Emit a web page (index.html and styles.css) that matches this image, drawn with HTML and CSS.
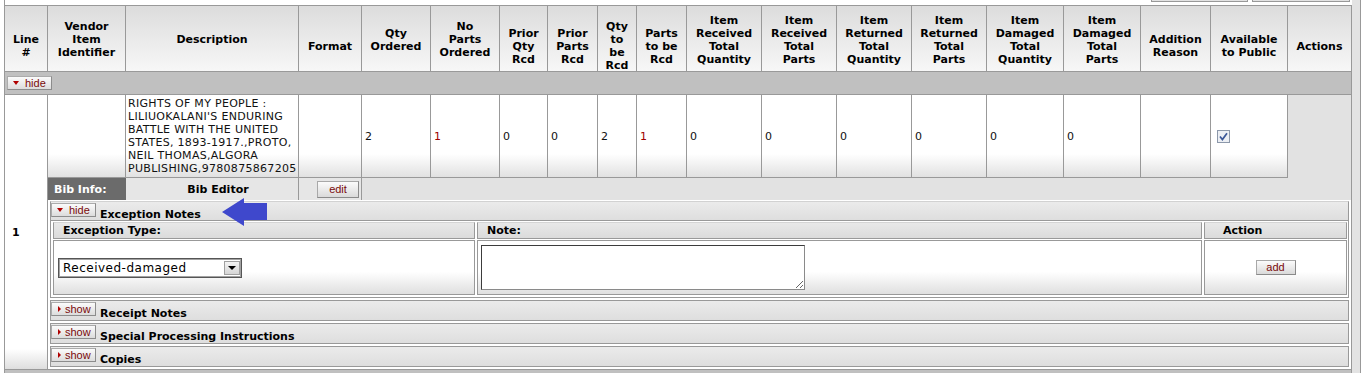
FILE: index.html
```html
<!DOCTYPE html>
<html lang="en">
<head>
  <meta charset="UTF-8">
  <meta name="viewport" content="width=device-width, initial-scale=1.0">
  <title>Receiving Line Items</title>
  <link rel="stylesheet" href="styles.css">
</head>
<body>
  <div class="frame">
    <div class="main">
      <div class="topbar">
        <span class="stub"></span>
        <span class="stub wide"></span>
      </div>

      <div class="sheet">
        <div class="head">
          <div class="th low">Line<br>#</div>
          <div class="th">Vendor<br>Item<br>Identifier</div>
          <div class="th">Description</div>
          <div class="th low">Format</div>
          <div class="th">Qty<br>Ordered</div>
          <div class="th">No<br>Parts<br>Ordered</div>
          <div class="th low">Prior<br>Qty<br>Rcd</div>
          <div class="th low">Prior<br>Parts<br>Rcd</div>
          <div class="th low">Qty<br>to<br>be<br>Rcd</div>
          <div class="th low">Parts<br>to be<br>Rcd</div>
          <div class="th">Item<br>Received<br>Total<br>Quantity</div>
          <div class="th">Item<br>Received<br>Total<br>Parts</div>
          <div class="th">Item<br>Returned<br>Total<br>Quantity</div>
          <div class="th">Item<br>Returned<br>Total<br>Parts</div>
          <div class="th">Item<br>Damaged<br>Total<br>Quantity</div>
          <div class="th">Item<br>Damaged<br>Total<br>Parts</div>
          <div class="th low">Addition<br>Reason</div>
          <div class="th low">Available<br>to Public</div>
          <div class="th low">Actions</div>
        </div>

        <div class="togglebar">
          <button class="tog"><span class="tri-down"></span>hide</button>
        </div>

        <div class="item">
          <div class="lineno">1</div>
          <div class="detail">
            <div class="datarow">
              <div class="td"></div>
              <div class="td desc">RIGHTS OF MY PEOPLE :<br>LILIUOKALANI'S ENDURING<br>BATTLE WITH THE UNITED<br>STATES, 1893-1917.,PROTO,<br>NEIL THOMAS,ALGORA<br>PUBLISHING,9780875867205</div>
              <div class="td"></div>
              <div class="td">2</div>
              <div class="td warn">1</div>
              <div class="td">0</div>
              <div class="td">0</div>
              <div class="td">2</div>
              <div class="td warn">1</div>
              <div class="td">0</div>
              <div class="td">0</div>
              <div class="td">0</div>
              <div class="td">0</div>
              <div class="td">0</div>
              <div class="td">0</div>
              <div class="td"></div>
              <div class="td check">
                <svg class="tick" width="13" height="13" viewBox="0 0 13 13">
                  <rect x="0.5" y="0.5" width="12" height="12" fill="#eceff4" stroke="#8c98aa"/>
                  <path d="M3 6.5 L5.4 9.6 L10 3.2" fill="none" stroke="#3b5898" stroke-width="1.7"/>
                </svg>
              </div>
            </div>

            <div class="bibrow">
              <div class="bib-label">Bib Info:</div>
              <div class="bib-editor">Bib Editor</div>
              <div class="bib-edit"><button class="btn edit">edit</button></div>
            </div>

            <div class="tab first">
              <div class="tab-head open">
                <button class="tog"><span class="tri-down"></span>hide</button>
                <span class="tab-title">Exception Notes</span>
              </div>
              <div class="tab-body">
                <div class="xh">Exception Type:</div>
                <div class="xh">Note:</div>
                <div class="xh act">Action</div>
                <div class="xd">
                  <div class="pick">
                    <span class="pick-val">Received-damaged</span>
                    <span class="pick-btn"><span class="tri-black"></span></span>
                  </div>
                </div>
                <div class="xd"><textarea class="note"></textarea></div>
                <div class="xd center"><button class="btn add">add</button></div>
              </div>
            </div>

            <div class="tab">
              <div class="tab-head">
                <button class="tog"><span class="tri-right"></span>show</button>
                <span class="tab-title">Receipt Notes</span>
              </div>
            </div>

            <div class="tab">
              <div class="tab-head">
                <button class="tog"><span class="tri-right"></span>show</button>
                <span class="tab-title">Special Processing Instructions</span>
              </div>
            </div>

            <div class="tab">
              <div class="tab-head">
                <button class="tog"><span class="tri-right"></span>show</button>
                <span class="tab-title">Copies</span>
              </div>
            </div>
          </div>
        </div>

        <div class="togglebar tail"></div>
      </div>
    </div>
    <div class="gutter"></div>

    <svg class="pointer" width="48" height="30" viewBox="0 0 48 30">
      <polygon points="1,15 23,1 23,6 46,6 46,23 23,23 23,29" fill="#3f48cc"/>
    </svg>
  </div>
</body>
</html>
```

FILE: styles.css
```css
body {
    margin: 0;
    font-family: "DejaVu Sans", Verdana, sans-serif;
    font-size: 11px;
    color: #000;
    background: #fff;
    overflow: hidden;
}

.frame {
    display: flex;
    position: relative;
    height: 373px;
    margin-left: 4px;
    border-left: 1px solid #999;
}

.main {
    width: 1347px;
}

.gutter {
    width: 8px;
    background: #e3e3e3;
    border-right: 1px solid #999;
}

/* cut-off controls above the table */
.topbar {
    height: 5px;
    display: flex;
    justify-content: flex-end;
    gap: 4px;
    padding-right: 2px;
}

.stub {
    width: 97px;
    height: 2px;
    box-sizing: border-box;
    background: #e2e2e2;
    border: 1px solid #999;
    border-top: 0;
}

.stub.wide {
    width: 98px;
}

.sheet {
    border-top: 1px solid #999;
    border-right: 1px solid #999;
}

/* column header */
.head {
    display: grid;
    grid-template-columns: 43px 78px 173px 63px 69px 69px 48px 50px 39px 50px 75px 75px 75px 75px 77px 77px 70px 77px 63px;
}

.th {
    height: 66px;
    box-sizing: border-box;
    padding-top: 2px;
    border-right: 1px solid #999;
    border-bottom: 1px solid #999;
    background: linear-gradient(#dcdcdc, #f7f7f7);
    display: flex;
    flex-direction: column;
    justify-content: center;
    align-items: center;
    text-align: center;
    font-weight: bold;
    line-height: 13px;
}

.th.low {
    padding-top: 15px;
}

.th:last-child {
    border-right: 0;
}

.togglebar {
    height: 23px;
    box-sizing: border-box;
    padding: 4px 0 0 2px;
    background: #c0c0c0;
    border-bottom: 1px solid #999;
}

.togglebar.tail {
    height: 4px;
    padding: 0;
    border-bottom: 0;
}

/* small show / hide buttons */
.tog {
    display: flex;
    align-items: center;
    width: 45px;
    height: 14px;
    box-sizing: border-box;
    margin: 0;
    padding: 0 0 1px 5px;
    border: 1px solid #ababab;
    border-right-color: #8c8c8c;
    border-bottom-color: #8c8c8c;
    background: linear-gradient(#fbfbfb, #dcdcdc);
    font-family: "Liberation Sans", Arial, sans-serif;
    font-size: 11px;
    color: #7a0a0a;
    line-height: 12px;
}

.tri-down {
    width: 0;
    height: 0;
    margin-right: 6px;
    border-left: 3px solid transparent;
    border-right: 3px solid transparent;
    border-top: 4px solid #b00000;
}

.tri-right {
    width: 0;
    height: 0;
    margin: 0 4px 0 1px;
    border-top: 3px solid transparent;
    border-bottom: 3px solid transparent;
    border-left: 3px solid #b00000;
}

.btn {
    box-sizing: border-box;
    margin: 0;
    padding: 0 0 1px;
    border: 1px solid #a8a8a8;
    border-right-color: #8a8a8a;
    border-bottom-color: #8a8a8a;
    background: linear-gradient(#fbfbfb, #dadada);
    font-family: "Liberation Sans", Arial, sans-serif;
    font-size: 11px;
    color: #7a0a0a;
}

.btn.edit {
    width: 42px;
    height: 17px;
}

.btn.add {
    width: 40px;
    height: 15px;
}

/* line item */
.item {
    display: flex;
    border-bottom: 1px solid #999;
}

.lineno {
    width: 43px;
    box-sizing: border-box;
    padding-left: 7px;
    border-right: 1px solid #999;
    display: flex;
    align-items: center;
    font-weight: bold;
    background: linear-gradient(#fff calc(100% - 20px), #dedede);
}

.detail {
    width: 1303px;
    background: #fff;
}

.datarow {
    display: grid;
    grid-template-columns: 78px 173px 63px 69px 69px 48px 50px 39px 50px 75px 75px 75px 75px 77px 77px 70px 77px;
    background: #e2e2e2;
}

.td {
    height: 83px;
    box-sizing: border-box;
    padding-left: 3px;
    border-right: 1px solid #999;
    border-bottom: 1px solid #999;
    background: linear-gradient(#fff 72%, #e1e1e1);
    display: flex;
    align-items: center;
    letter-spacing: 0.3px;
    color: #111;
}

.td.desc {
    padding-left: 2px;
    line-height: 13px;
    white-space: nowrap;
    overflow: hidden;
}

.td.warn {
    color: #a00000;
}

.td.check {
    padding-left: 6px;
}

.bibrow {
    display: flex;
    height: 22px;
    margin-bottom: 1px;
    background: #e2e2e2;
}

.bib-label {
    width: 78px;
    box-sizing: border-box;
    padding-left: 6px;
    display: flex;
    align-items: center;
    background: #6b6b6b;
    color: #fff;
    font-weight: bold;
}

.bib-editor {
    width: 173px;
    box-sizing: border-box;
    padding-left: 12px;
    border-right: 1px solid #999;
    display: flex;
    align-items: center;
    justify-content: center;
    background: #e6e6e6;
    font-weight: bold;
}

.bib-edit {
    width: 63px;
    box-sizing: border-box;
    padding-left: 18px;
    border-right: 1px solid #999;
    display: flex;
    align-items: center;
    background: #e6e6e6;
}

/* collapsible tabs */
.tab {
    margin: 0 2px 2px;
    border: 1px solid #999;
    background: #fff;
}

.tab.first {
    border-top-color: #d2d2d2;
}

.tab-head {
    height: 19px;
    box-sizing: border-box;
    display: flex;
    align-items: flex-start;
    padding-top: 1px;
    background: linear-gradient(#ebebeb, #dedede);
}

.tab-head.open {
    border-bottom: 1px solid #999;
}

.tab-title {
    margin-left: 4px;
    padding-top: 5px;
    font-weight: bold;
    line-height: 13px;
}

.tab-body {
    display: grid;
    grid-template-columns: 422px 725px 143px;
    column-gap: 2px;
    row-gap: 1px;
    padding: 1px 1px 2px 2px;
}

.xh {
    height: 17px;
    box-sizing: border-box;
    padding: 1px 0 0 9px;
    border: 1px solid #999;
    border-top-color: #d4d4d4;
    background: linear-gradient(#e8e8e8, #dbdbdb);
    font-weight: bold;
    line-height: 13px;
}

.xh.act {
    padding-left: 18px;
}

.xd {
    height: 55px;
    box-sizing: border-box;
    border: 1px solid #999;
    background: linear-gradient(#fff 58%, #dfdfdf);
    display: flex;
    align-items: center;
}

.xd.center {
    justify-content: center;
}

.pick {
    width: 184px;
    height: 20px;
    box-sizing: border-box;
    margin-left: 4px;
    display: flex;
    align-items: center;
    justify-content: space-between;
    border: 1px solid #555;
    box-shadow: inset 0 0 0 1px #a2a2a2;
    background: #fff;
}

.pick-val {
    padding-left: 4px;
    font-size: 12px;
    letter-spacing: 0.5px;
}

.pick-btn {
    width: 16px;
    height: 14px;
    box-sizing: border-box;
    margin-right: 1px;
    display: flex;
    align-items: center;
    justify-content: center;
    border: 1px solid #a0a0a0;
    background: linear-gradient(#f4f4f4, #d6d6d6);
}

.tri-black {
    width: 0;
    height: 0;
    border-left: 4px solid transparent;
    border-right: 4px solid transparent;
    border-top: 4px solid #000;
}

.note {
    width: 324px;
    height: 45px;
    box-sizing: border-box;
    margin: 0 0 0 3px;
    padding: 1px;
    border: 1px solid #3c3c3c;
    border-right-color: #8a8a8a;
    border-bottom-color: #8a8a8a;
    font-family: "DejaVu Sans", Verdana, sans-serif;
    font-size: 11px;
}

/* annotation arrow drawn over the page */
.pointer {
    position: absolute;
    left: 216px;
    top: 197px;
}
```
